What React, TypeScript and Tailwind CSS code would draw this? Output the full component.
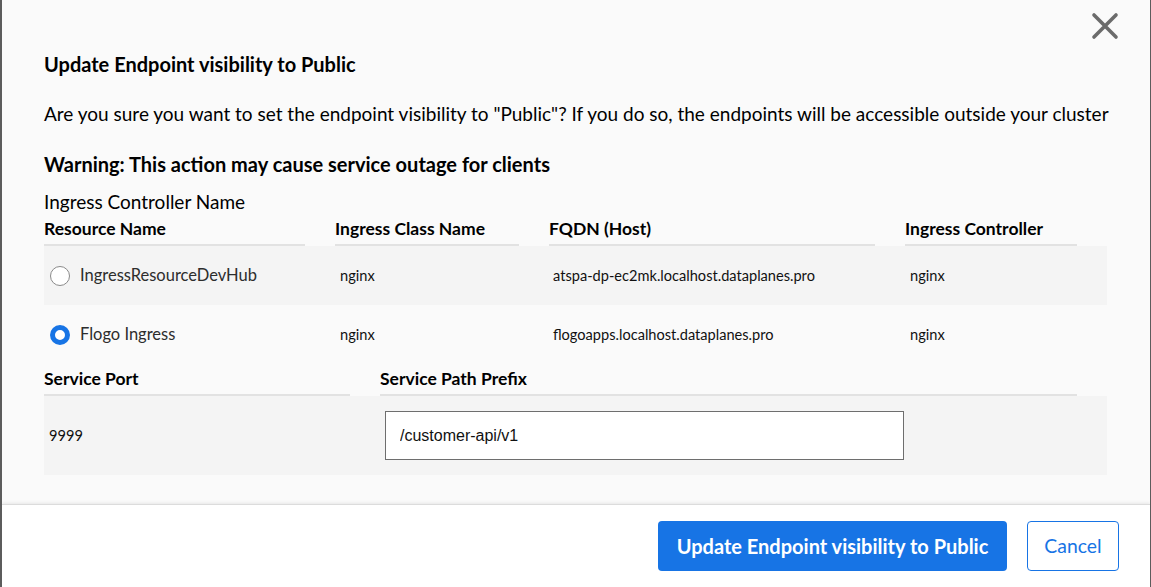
import React from "react";

const font = { fontFamily: '"Source Sans Pro", Lato, "Noto Sans", sans-serif' };

function CloseIcon() {
  return (
    <svg width="28" height="28" viewBox="0 0 28 28" className="block">
      <path d="M3 3 L25 25 M25 3 L3 25" stroke="#6b6b6b" strokeWidth="3.6" strokeLinecap="round" />
    </svg>
  );
}

function Radio({ checked }: { checked: boolean }) {
  if (checked) {
    return <span className="block w-[20px] h-[20px] rounded-full border-[5px] border-[#1774e5] bg-white" />;
  }
  return <span className="block w-[20px] h-[20px] rounded-full border border-[#8a8a8a] bg-white" />;
}

export default function App() {
  const rows = [
    { name: "IngressResourceDevHub", cls: "nginx", host: "atspa-dp-ec2mk.localhost.dataplanes.pro", ctrl: "nginx", checked: false, bg: "bg-[#f4f4f4]" },
    { name: "Flogo Ingress", cls: "nginx", host: "flogoapps.localhost.dataplanes.pro", ctrl: "nginx", checked: true, bg: "" },
  ];
  return (
    <div className="w-[1151px] h-[587px] overflow-hidden bg-[#fafafa] border-l-2 border-r border-[#5c5c5c] flex flex-col text-black" style={font}>
      <div className="relative flex-1 pl-[42px] pr-[42px]">
        <button className="absolute left-[1089px] top-[12px]">
          <CloseIcon />
        </button>
        <h1 className="mt-[52px] text-[20px] leading-[24px] font-bold">Update Endpoint visibility to Public</h1>
        <p className="mt-[26px] text-[19px] leading-[24px] whitespace-nowrap">
          Are you sure you want to set the endpoint visibility to "Public"? If you do so, the endpoints will be accessible outside your cluster
        </p>
        <p className="mt-[26px] text-[20px] leading-[24px] font-bold">Warning: This action may cause service outage for clients</p>
        <p className="mt-[14px] text-[19px] leading-[24px]">Ingress Controller Name</p>

        <div className="w-[1063px]">
          <div className="grid grid-cols-[291px_214px_356px_202px] text-[17.5px] font-bold mt-[2px]">
            {["Resource Name", "Ingress Class Name", "FQDN (Host)", "Ingress Controller"].map((h) => (
              <div key={h} className="mr-[30px] border-b-2 border-[#e2e2e2] leading-[20px] pb-[5px] pt-[3px] whitespace-nowrap">{h}</div>
            ))}
          </div>
          {rows.map((r) => (
            <div key={r.name} className={`grid grid-cols-[291px_214px_356px_202px] h-[59px] items-center ${r.bg}`}>
              <div className="flex items-center gap-[10px] pl-[6px] text-[16.5px] text-[#2d2d2d]">
                <Radio checked={r.checked} />
                <span>{r.name}</span>
              </div>
              <div className="pl-[5px] text-[14.6px] text-[#111]">{r.cls}</div>
              <div className="pl-[4px] text-[14.6px] text-[#111]">{r.host}</div>
              <div className="pl-[5px] text-[14.6px] text-[#111]">{r.ctrl}</div>
            </div>
          ))}

          <div className="grid grid-cols-[336px_727px] text-[17.5px] font-bold mt-[2px]">
            {["Service Port", "Service Path Prefix"].map((h) => (
              <div key={h} className="mr-[30px] border-b-2 border-[#e2e2e2] leading-[20px] pb-[5px] pt-[3px]">{h}</div>
            ))}
          </div>
          <div className="grid grid-cols-[336px_727px] h-[79px] items-center bg-[#f4f4f4]">
            <div className="pl-[5px] text-[14.6px] text-[#111]">9999</div>
            <div className="pl-[5px]">
              <input
                readOnly
                value="/customer-api/v1"
                className="w-[519px] h-[49px] border border-[#6e6e6e] bg-white px-[14px] text-[16px] text-[#111] outline-none"
                style={{ fontFamily: '"Liberation Sans", Arial, sans-serif' }}
              />
            </div>
          </div>
        </div>
      </div>
      <div className="h-[83px] bg-white border-t border-[#dcdcdc] shadow-[0_-1px_3px_rgba(0,0,0,0.08)] flex items-center justify-end gap-[20px] pr-[31px]">
        <button className="h-[50px] w-[349px] rounded-[4px] bg-[#1774e5] text-white text-[20px] font-bold whitespace-nowrap">
          Update Endpoint visibility to Public
        </button>
        <button className="h-[50px] w-[92px] rounded-[4px] border border-[#1774e5] bg-white text-[#1774e5] text-[19.4px]">
          Cancel
        </button>
      </div>
    </div>
  );
}
